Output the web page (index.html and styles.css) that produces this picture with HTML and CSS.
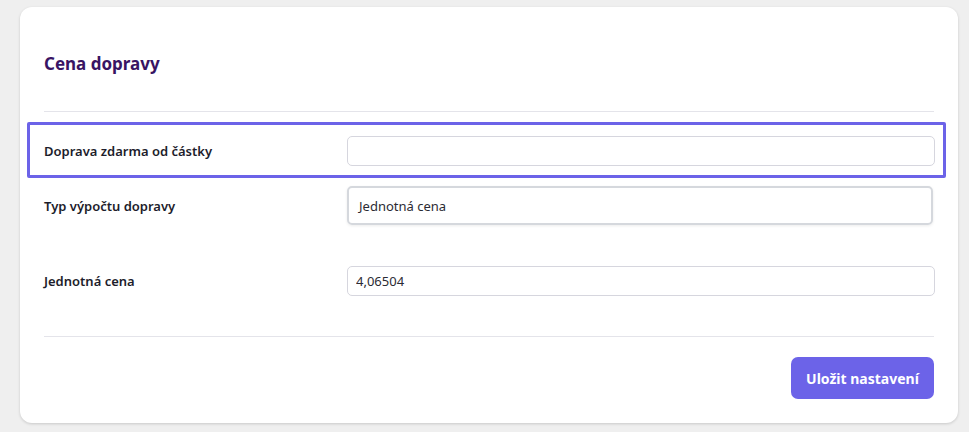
FILE: index.html
```html
<!DOCTYPE html>
<html lang="cs">
<head>
    <meta charset="UTF-8">
    <meta name="viewport" content="width=device-width, initial-scale=1.0">
    <title>Cena dopravy</title>
    <link rel="stylesheet" href="styles.css">
</head>
<body>
    <div class="card">
        <div class="card-header">
            <h2>Cena dopravy</h2>
        </div>

        <form class="settings">
            <div class="row row-highlight">
                <label for="freeFrom">Doprava zdarma od částky</label>
                <input id="freeFrom" type="text" />
            </div>

            <div class="row row-select">
                <label for="calcType">Typ výpočtu dopravy</label>
                <div class="select">Jednotná cena</div>
            </div>

            <div class="row row-price">
                <label for="unitPrice">Jednotná cena</label>
                <input id="unitPrice" type="text" value="4,06504" />
            </div>
        </form>

        <div class="card-footer">
            <button type="button">Uložit nastavení</button>
        </div>
    </div>
</body>
</html>
```

FILE: styles.css
```css
body {
    font-family: 'Noto Sans', 'Open Sans', sans-serif;
    margin: 0;
    background: #efefef;
    padding: 7px 11px 9px 20px;
}

.card {
    background: white;
    border-radius: 12px;
    box-shadow: 0 1px 3px rgba(0, 0, 0, 0.16);
    padding: 0 24px 24px 24px;
    height: 416px;
    box-sizing: border-box;
}

.card-header {
    padding: 45px 0 35px;
    border-bottom: 1px solid #e4e4ea;
}

.card-header h2 {
    margin: 0;
    font-size: 17px;
    line-height: 24px;
    font-weight: 700;
    color: #381463;
}

.settings {
    padding-top: 24px;
}

.row {
    display: grid;
    grid-template-columns: 303px 1fr;
    align-items: center;
    height: 30px;
}

.row label {
    font-size: 13px;
    font-weight: 600;
    color: #1d1d2b;
}

.row input {
    height: 30px;
    box-sizing: border-box;
    border: 1px solid #d6d6de;
    border-radius: 5px;
    padding: 0 8px;
    font-family: inherit;
    font-size: 13px;
    color: #2b2b33;
    margin-right: -1px;
}

.row-highlight {
    position: relative;
}

.row-highlight::after {
    content: "";
    position: absolute;
    top: -14px;
    bottom: -12px;
    left: -17px;
    right: -12px;
    border: 3px solid #6c63e8;
    border-radius: 2px;
}

.row-select {
    margin-top: 20px;
    height: 39px;
}

.select {
    height: 39px;
    box-sizing: border-box;
    border: 2px solid #d5d8dd;
    border-radius: 5px;
    box-shadow: 0 1px 3px rgba(0, 0, 0, 0.08);
    padding: 0 10px;
    margin-right: 1px;
    display: flex;
    align-items: center;
    font-size: 13px;
    color: #2b2b33;
}

.row-price {
    margin-top: 41px;
}

.card-footer {
    margin-top: 40px;
    border-top: 1px solid #e4e4ea;
    padding-top: 20px;
    display: flex;
    justify-content: flex-end;
}

.card-footer button {
    width: 143px;
    height: 42px;
    border: none;
    border-radius: 7px;
    background: #6c63e8;
    color: white;
    font-family: inherit;
    font-size: 14px;
    font-weight: 700;
}
```
